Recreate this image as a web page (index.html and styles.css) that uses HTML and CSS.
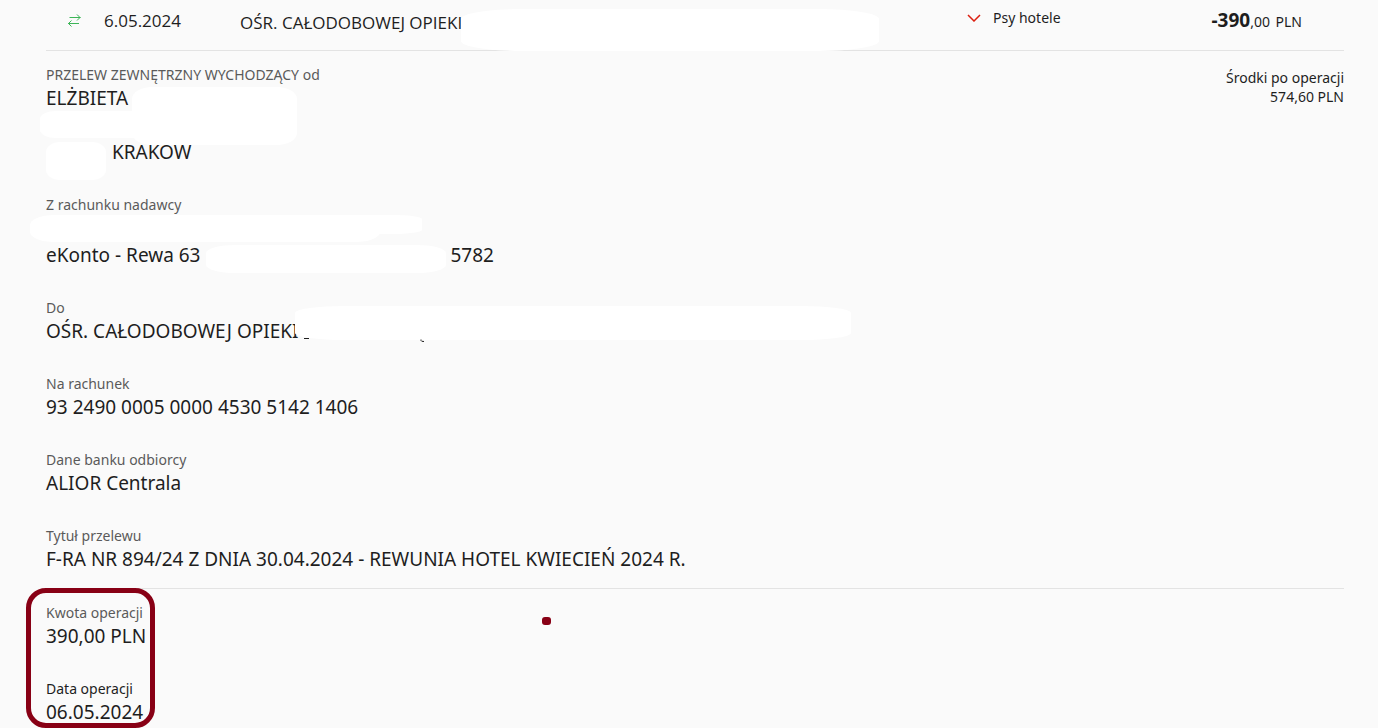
FILE: index.html
```html
<!DOCTYPE html>
<html lang="pl">
<head>
    <meta charset="UTF-8">
    <meta name="viewport" content="width=device-width, initial-scale=1.0">
    <title>Szczegóły operacji</title>
    <link rel="stylesheet" href="styles.css">
</head>
<body>
    <div class="container">
        <div class="summary">
            <svg class="transfer-icon" width="14" height="14" viewBox="0 0 14 14" fill="none" stroke="#3cb557">
                <path d="M1.5 3.5h11M9 0.5l3 3-3 3M11 9.5H0M3.5 6.5l-3 3 3 3"/>
            </svg>
            <div class="date">6.05.2024</div>
            <div class="title">OŚR. CAŁODOBOWEJ OPIEKI<span class="mask mask-title"></span></div>
            <div class="category">
                <svg width="14" height="8" viewBox="0 0 14 8" fill="none" stroke="#dc1e0f" stroke-width="1.5">
                    <path d="M1 1l6 6 6-6"/>
                </svg>
                <span>Psy hotele</span>
            </div>
            <div class="amount"><strong>-390</strong>,00 <span class="currency">PLN</span></div>
        </div>

        <div class="details">
            <dl class="fields">
                <div class="field">
                    <dt>PRZELEW ZEWNĘTRZNY WYCHODZĄCY od</dt>
                    <dd>ELŻBIETA<span class="mask mask-name"></span></dd>
                    <dd><span class="mask mask-street"></span></dd>
                    <dd class="city"><span class="mask mask-postcode"></span>KRAKOW</dd>
                </div>
                <div class="field">
                    <dt>Z rachunku nadawcy</dt>
                    <dd class="account">eKonto - Rewa 63 <span class="number-gap"></span>5782
                        <span class="mask mask-owner"></span>
                        <span class="mask mask-owner-end"></span>
                        <span class="mask mask-number"></span>
                    </dd>
                </div>
                <div class="field">
                    <dt>Do</dt>
                    <dd>OŚR. CAŁODOBOWEJ OPIEKI
                        <span class="mask mask-receiver"></span>
                        <svg class="leftover" width="132" height="8" viewBox="0 0 132 8" fill="none" stroke="#1e1e1e">
                            <path d="M9 2.5h5M126 3.5v1q0 1 3 1"/>
                        </svg>
                    </dd>
                </div>
                <div class="field">
                    <dt>Na rachunek</dt>
                    <dd>93 2490 0005 0000 4530 5142 1406</dd>
                </div>
                <div class="field">
                    <dt>Dane banku odbiorcy</dt>
                    <dd>ALIOR Centrala</dd>
                </div>
                <div class="field">
                    <dt>Tytuł przelewu</dt>
                    <dd>F-RA NR 894/24 Z DNIA 30.04.2024 - REWUNIA HOTEL KWIECIEŃ 2024 R.</dd>
                </div>
            </dl>
            <div class="balance">
                <div>Środki po operacji</div>
                <div>574,60 PLN</div>
            </div>
        </div>

        <dl class="fields operation">
            <div class="field">
                <dt>Kwota operacji</dt>
                <dd>390,00 PLN</dd>
            </div>
            <div class="field">
                <dt class="dark">Data operacji</dt>
                <dd>06.05.2024</dd>
            </div>
            <span class="marker-frame"></span>
            <span class="marker-dot"></span>
        </dl>
    </div>
</body>
</html>
```

FILE: styles.css
```css
* {
    box-sizing: border-box;
}
body {
    margin: 0;
    min-height: 100vh;
    background-color: #fafafa;
    color: #1e1e1e;
    font-family: "Noto Sans", "Open Sans", sans-serif;
    font-size: 14px;
    line-height: 20px;
}
.container {
    padding: 0 34px 0 46px;
}
.summary {
    display: grid;
    grid-template-columns: 36px 136px 1fr 244px 91px;
    align-items: start;
    height: 51px;
    padding: 8px 42px 0 22px;
    border-bottom: 1px solid #e3e3e3;
}
.transfer-icon {
    margin-top: 6px;
}
.date, .title {
    position: relative;
    font-family: "Open Sans", sans-serif;
    font-size: 17px;
    line-height: 26px;
}
.title {
    padding-top: 2px;
}
.category {
    display: flex;
    align-items: center;
    gap: 12px;
}
.amount {
    line-height: 24px;
    text-align: right;
    white-space: nowrap;
}
.amount strong {
    font-size: 19px;
}
.currency {
    margin-left: 2px;
}
.details {
    display: flex;
    justify-content: space-between;
    padding: 14px 0 15px;
    border-bottom: 1px solid #e3e3e3;
}
.fields {
    display: flex;
    flex-direction: column;
    gap: 29px;
    margin: 0;
}
.field dt {
    color: #5a5a5a;
}
.field dt.dark {
    color: #1e1e1e;
}
.field dd {
    position: relative;
    min-height: 27px;
    margin: 0;
    font-size: 19px;
    line-height: 27px;
}
.field .city {
    padding-left: 66px;
}
.field .account {
    padding-top: 27px;
}
.number-gap {
    display: inline-block;
    width: 245px;
}
.balance {
    padding-top: 3px;
    line-height: 19px;
    text-align: right;
}
.operation {
    position: relative;
    padding-top: 14px;
}

/* white covers over private data */
.mask {
    position: absolute;
    background-color: #fff;
}
.mask-title {
    top: 1px;
    left: 221px;
    width: 418px;
    height: 42px;
    border-radius: 60px / 10px;
}
.mask-name {
    top: 2px;
    left: 86px;
    width: 165px;
    height: 58px;
    border-radius: 20px / 12px;
}
.mask-street {
    top: -1px;
    left: -6px;
    width: 110px;
    height: 27px;
    border-radius: 16px / 8px;
}
.mask-postcode {
    top: 3px;
    left: 0;
    width: 60px;
    height: 38px;
    border-radius: 14px / 10px;
}
.mask-owner {
    top: 0;
    left: -16px;
    width: 350px;
    height: 27px;
    border-radius: 24px / 10px;
}
.mask-owner-end {
    top: 0;
    left: 4px;
    width: 372px;
    height: 19px;
    border-radius: 30px / 4px;
}
.mask-number {
    top: 30px;
    left: 160px;
    width: 240px;
    height: 28px;
    border-radius: 30px / 8px;
}
.mask-receiver {
    top: -12px;
    left: 249px;
    width: 556px;
    height: 34px;
    border-radius: 50px / 7px;
}
.leftover {
    position: absolute;
    top: 18px;
    left: 249px;
    overflow: visible;
}

/* dark red pen marks */
.marker-frame {
    position: absolute;
    top: -1px;
    left: -20px;
    width: 129px;
    height: 140px;
    border: 5px solid #880015;
    border-radius: 20px;
}
.marker-dot {
    position: absolute;
    top: 28px;
    left: 496px;
    width: 9px;
    height: 8px;
    border-radius: 3px;
    background-color: #880015;
}
```
